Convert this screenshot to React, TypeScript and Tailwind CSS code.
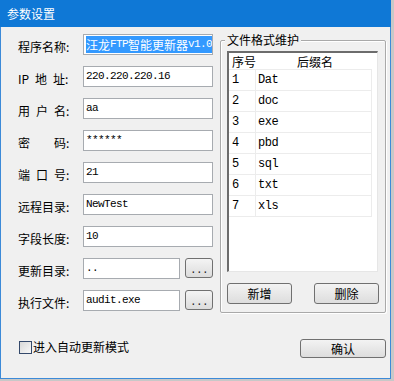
import React from "react";

const MONO = "font-['Liberation_Mono',monospace]";

function TextBox({ value, width, selected }: { value?: string; width: number; selected?: boolean }) {
  return (
    <div
      className="h-[21px] bg-white border border-[#a7abb0] overflow-hidden whitespace-nowrap pl-[2px] pt-[1px] flex items-start text-[11px] leading-[14px]"
      style={{ width }}
    >
      {selected ? (
        <span className="flex items-center bg-[#3399ff] text-white h-[17px] text-[12px] leading-[17px] font-['Noto_Sans_CJK_SC',sans-serif] whitespace-nowrap shrink-0">
          <span>汪龙</span>
          <span className={`${MONO} text-[11px] tracking-[-0.6px]`}>FTP</span>
          <span>智能更新器</span>
          <span className={`${MONO} text-[11px] tracking-[-0.6px]`}>v1.0</span>
        </span>
      ) : (
        <span className={`${MONO} text-[11px] tracking-[-0.6px] leading-[16px] text-black`}>{value}</span>
      )}
    </div>
  );
}

function DotsButton() {
  return (
    <div className="w-[28px] h-[20px] rounded-[3px] border border-[#707070] bg-gradient-to-b from-[#f4f4f4] to-[#dcdcdc] flex items-center justify-center">
      <span className={`${MONO} text-[11px] tracking-[-0.6px] leading-[12px] mt-[3px] text-[#222]`}>...</span>
    </div>
  );
}

function Row({ label, value, selected, button }: { label: string; value?: string; selected?: boolean; button?: boolean }) {
  return (
    <div className="flex items-start h-[21px]">
      <div className="w-[65px] mt-[6px] text-[12px] leading-[14px] text-black whitespace-pre">{label}</div>
      {button ? (
        <div className="flex gap-[5px]">
          <TextBox value={value} width={97} />
          <DotsButton />
        </div>
      ) : (
        <TextBox value={value} width={130} selected={selected} />
      )}
    </div>
  );
}

function WinButton({ label, w, h }: { label: string; w: number; h: number }) {
  return (
    <div
      className="rounded-[3px] border border-[#707070] bg-gradient-to-b from-[#f3f3f3] to-[#dddddd] flex items-center justify-center text-[12px] leading-[14px] text-black"
      style={{ width: w, height: h }}
    >
      {label}
    </div>
  );
}

export default function App() {
  const exts = ["Dat", "doc", "exe", "pbd", "sql", "txt", "xls"];
  return (
    <div className="w-[394px] h-[381px] bg-[#c8c8c8] overflow-hidden font-['Noto_Sans_CJK_SC',sans-serif]">
      <div className="w-[391px] h-[379px] flex flex-col">
        <div className="h-[27px] bg-[#0f78d6] flex items-center pl-[7px] text-white text-[12px] leading-[14px]">
          参数设置
        </div>
        <div className="flex-1 bg-[#f0f0f0] border-x border-b border-[#3c8ad8] flex flex-col">
          <div className="flex items-start pt-[7px] pl-[17px]">
            <div className="flex flex-col gap-[11px] w-[195px]">
              <Row label="程序名称:" selected />
              <Row label={"IP\u2002地\u2002址:"} value="220.220.220.16" />
              <Row label={"用\u2002户\u2002名:"} value="aa" />
              <Row label={"密\u3000\u3000码:"} value="******" />
              <Row label={"端\u2002口\u2002号:"} value="21" />
              <Row label="远程目录:" value="NewTest" />
              <Row label="字段长度:" value="10" />
              <Row label="更新目录:" value=".." button />
              <Row label="执行文件:" value="audit.exe" button />
            </div>
            <div className="relative ml-[7px] mt-[6px] w-[166px] h-[273px] border border-[#a9a9a9] rounded-[2px] shadow-[inset_1px_1px_0_#ffffff,1px_1px_0_#ffffff]">
              <div className="absolute -top-[9px] left-[4px] px-[2px] bg-[#f0f0f0] text-[12px] leading-[16px] text-black">
                文件格式维护
              </div>
              <div className="ml-[6px] mt-[10px] w-[151px] h-[221px] bg-white border-t-2 border-l-2 border-r border-b border-t-[#6c6c6c] border-l-[#6c6c6c] border-r-[#e6e6e6] border-b-[#e6e6e6] overflow-hidden">
                <div className="relative h-[17px] w-[143px] border-b border-[#ececec] text-[12px] leading-[17px] text-black">
                  <span className="absolute left-[3px] top-0">序号</span>
                  <span className="absolute left-[68px] top-0">后缀名</span>
                </div>
                {exts.map((e, i) => (
                  <div key={e} className="flex h-[21px] w-[143px] border-b border-r border-[#ececec]">
                    <div className={`w-[27px] border-r border-[#ececec] pl-[3px] ${MONO} text-[12px] tracking-[-0.5px] leading-[20px] text-black`}>
                      {i + 1}
                    </div>
                    <div className={`pl-[2px] ${MONO} text-[12px] tracking-[-0.5px] leading-[20px] text-black`}>{e}</div>
                  </div>
                ))}
              </div>
              <div className="flex justify-between px-[6px] mt-[11px]">
                <WinButton label="新增" w={65} h={21} />
                <WinButton label="删除" w={65} h={21} />
              </div>
            </div>
          </div>
          <div className="flex items-start justify-between mt-[26px] pl-[18px] pr-[4px]">
            <div className="flex items-center mt-[1px]">
              <div className="w-[13px] h-[13px] border border-[#34496b] bg-gradient-to-br from-[#d8d8d8] to-[#f8f8f8]" />
              <span className="ml-[1px] text-[12px] leading-[14px] text-black">进入自动更新模式</span>
            </div>
            <WinButton label="确认" w={86} h={19} />
          </div>
        </div>
      </div>
    </div>
  );
}
